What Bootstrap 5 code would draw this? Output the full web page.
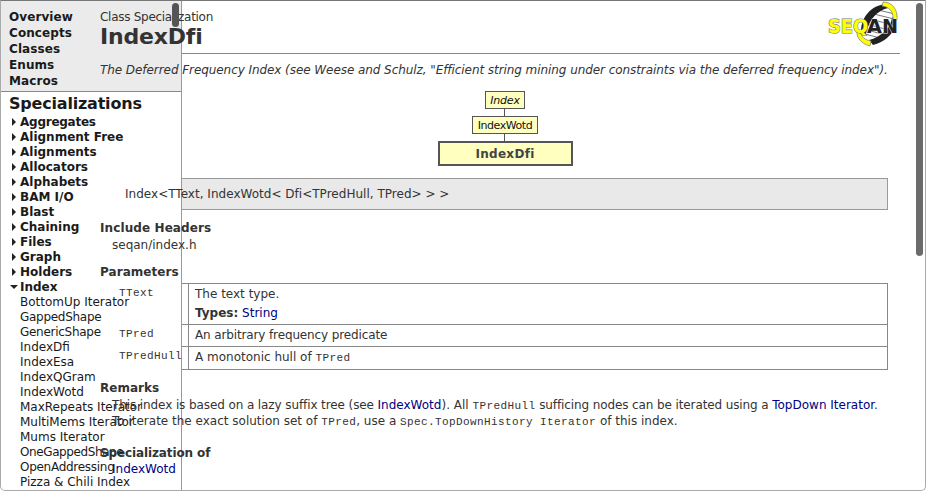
<!DOCTYPE html>
<html lang="en">
<head>
<meta charset="utf-8">
<title>IndexDfi</title>
<link href="https://cdn.jsdelivr.net/npm/bootstrap@5.3.0/dist/css/bootstrap.min.css" rel="stylesheet">
<style>
body{font:12px/16px Verdana,"DejaVu Sans",sans-serif;color:#333;background:#fff;overflow:hidden}
.frame{height:491px;border:1px solid #aaa;border-top-color:#777;border-radius:0 0 5px 5px;overflow:hidden}
.side{width:181px;border-right:1px solid #999;color:#1a1a1a;white-space:nowrap}
.top-links{height:91px;background:#ebebeb;border-bottom:1px solid #888;padding:8px 0 0 8px;font-weight:700;letter-spacing:.08px}
.side h2{font-size:16px;line-height:20px;font-weight:700;margin:2px 0 0 8px;letter-spacing:-.2px}
.tree{line-height:15px;padding:1px 0 0 19px}
.group{font-weight:700;position:relative}
.group:first-child{letter-spacing:-.25px}
.group::before{content:"";position:absolute;left:-8px;top:3px;border-left:4px solid #222;border-top:4px solid transparent;border-bottom:4px solid transparent}
.group.open::before{left:-10px;top:5px;border-top:4px solid #222;border-left:4px solid transparent;border-right:4px solid transparent;border-bottom:0}
.tight{letter-spacing:-.28px}
.tighter{letter-spacing:-.4px}
.doc{white-space:nowrap;padding-right:37px;min-width:0}
.pull{margin-left:-82px}
.pull-in{margin-left:-70px}
.doc a{color:#000080;text-decoration:none}
.doc h1{font-size:22px;line-height:24px;font-weight:700;margin-bottom:0;letter-spacing:-.2px}
.doc h3{font-size:12px;line-height:16px;font-weight:700;margin-bottom:0}
.rule{border-top:1px solid #888;margin:4px -12px 0 0}
.abstract{margin-top:8px;letter-spacing:-.067px}
.doc code{font:11px/14px "Liberation Mono",monospace;color:#333;letter-spacing:.4px}
.tree-chart{margin:13px 66px 0 5px;width:636px}
.node{background:#ffffc0;border:1px solid #555;height:18px;font-size:11px;line-height:17px;color:#111;text-align:center}
.n1{width:40px;letter-spacing:-.2px}
.n2{width:66px;letter-spacing:-.45px}
.stem{width:1px;height:7px;background:#555;margin-right:1px}
.node-main{border-width:2px;width:135px;height:25px;line-height:22px;font-size:12px;color:#444;letter-spacing:.3px}
.signature{height:32px;line-height:30px;background:#e9e9e9;border:1px solid #999;border-left:0;margin-top:12px}
.sig-text{margin-left:-57px;letter-spacing:.02px}
.s1{margin-top:10px;letter-spacing:.1px}
.s2{margin-top:11px;letter-spacing:.05px}
.s3{margin-top:10px}
.s4{margin-top:16px;letter-spacing:-.12px}
.headers{padding-top:1px}
.params{display:grid;grid-template:41px 22px 23px/6px 1fr;border-top:1px solid #888;border-right:1px solid #888;margin-top:3px}
.params>div{border-bottom:1px solid #888;line-height:20px}
.params>div:nth-child(even){border-left:1px solid #888;padding-left:6px}
.params>.key{line-height:17px}
.params>.v1{line-height:19px;padding-top:1px}
.key code{margin-left:-63px}
.remark{margin-top:1px}
.predicate{letter-spacing:-.13px}
.lead-in{letter-spacing:-.1px}
.mid-line{letter-spacing:-.11px}
.bar{position:absolute;width:7px;border-radius:5px;background:#6b6b6b}
.bar-side{left:171px;top:2px;height:24px;background:#555}
.bar-main{left:915px;top:2px;height:253px}
.logo{position:absolute;left:826px;top:0}
</style>
<script src="https://cdn.jsdelivr.net/npm/bootstrap@5.3.0/dist/js/bootstrap.bundle.min.js"></script>
</head>
<body>
<div class="frame d-flex position-relative">
<aside class="side flex-shrink-0">
<nav class="top-links d-flex flex-column"><span>Overview</span><span>Concepts</span><span>Classes</span><span>Enums</span><span>Macros</span></nav>
<h2>Specializations</h2>
<div class="tree">
<div class="group">Aggregates</div><div class="group">Alignment Free</div><div class="group">Alignments</div><div class="group">Allocators</div><div class="group">Alphabets</div><div class="group">BAM I/O</div><div class="group">Blast</div><div class="group">Chaining</div><div class="group">Files</div><div class="group">Graph</div><div class="group">Holders</div><div class="group open">Index</div>
<div>BottomUp Iterator</div><div class="tight">GappedShape</div><div class="tight">GenericShape</div><div>IndexDfi</div><div>IndexEsa</div><div>IndexQGram</div><div>IndexWotd</div><div>MaxRepeats Iterator</div><div>MultiMems Iterator</div><div>Mums Iterator</div><div class="tighter">OneGappedShape</div><div class="tight">OpenAddressing</div><div>Pizza &amp; Chili Index</div>
</div>
</aside>
<main class="doc flex-grow-1">
<div class="pull pt-2 tight">Class Specialization</div>
<h1 class="pull">IndexDfi</h1>
<div class="rule"></div>
<div class="pull fst-italic abstract">The Deferred Frequency Index (see Weese and Schulz, "Efficient string mining under constraints via the deferred frequency index").</div>
<div class="tree-chart d-flex flex-column align-items-center">
<div class="node fst-italic n1">Index</div><div class="stem"></div><div class="node n2">IndexWotd</div><div class="stem"></div><div class="node node-main fw-bold">IndexDfi</div>
</div>
<div class="signature"><span class="sig-text">Index&lt;TText, IndexWotd&lt; Dfi&lt;TPredHull, TPred&gt; &gt; &gt;</span></div>
<h3 class="pull s1">Include Headers</h3>
<div class="pull-in headers">seqan/index.h</div>
<h3 class="pull s2">Parameters</h3>
<div class="params">
<div class="key"><code>TText</code></div><div class="v1">The text type.<br><b>Types:</b> <a href="#">String</a></div>
<div class="key"><code>TPred</code></div><div class="predicate">An arbitrary frequency predicate</div>
<div class="key"><code>TPredHull</code></div><div>A monotonic hull of <code>TPred</code></div>
</div>
<h3 class="pull s3">Remarks</h3>
<div class="pull-in remark"><span class="lead-in">This index is based on a lazy suffix tree (see </span><a href="#">IndexWotd</a>). All <code>TPredHull</code><span class="mid-line"> sufficing nodes can be iterated using a </span><a href="#">TopDown Iterator</a>.<br>To iterate the exact solution set of <code>TPred</code>, use a <code>Spec.TopDownHistory Iterator</code> of this index.</div>
<h3 class="pull s4">Specialization of</h3>
<div class="pull-in pt-0"><a href="#">IndexWotd</a></div>
</main>
<svg class="logo" width="72" height="46" viewBox="0 0 72 46">
<path d="M37 30L56 6L69 13L64 28L44 41Z" fill="#fff"/>
<g fill="none" stroke="#777" stroke-width="1"><path d="M51 9l17 4M47 13l20 5M43 18l23 6M39 23l23 6M37 28l21 6M38 33l15 4"/></g>
<path d="M34 31C34 16 44 5 58 3L61 7C50 10 42 18 39 33Z" fill="#222"/>
<path d="M42 39C54 36 63 28 65 17L69 14C71 30 59 41 46 44Z" fill="#222"/>
<path d="M56 1C65 1 71 8 70 19L66 17C66 10 62 6 55 5ZM33 30C34 36 38 39 44 40L43 45C35 43 29 37 30 30Z" fill="#ff0" stroke="#777" stroke-width=".7"/>
<g font-family="DejaVu Sans" font-weight="700" font-size="19"><text x="1" y="32" textLength="40" lengthAdjust="spacingAndGlyphs" fill="#ff0" stroke="#777" stroke-width="1.2" paint-order="stroke">SEQ</text><text x="40" y="32" textLength="31" lengthAdjust="spacingAndGlyphs" fill="#222" stroke="#fff" stroke-width=".8" paint-order="stroke">AN</text></g>
</svg>
<div class="bar bar-side"></div><div class="bar bar-main"></div>
</div>
</body>
</html>
